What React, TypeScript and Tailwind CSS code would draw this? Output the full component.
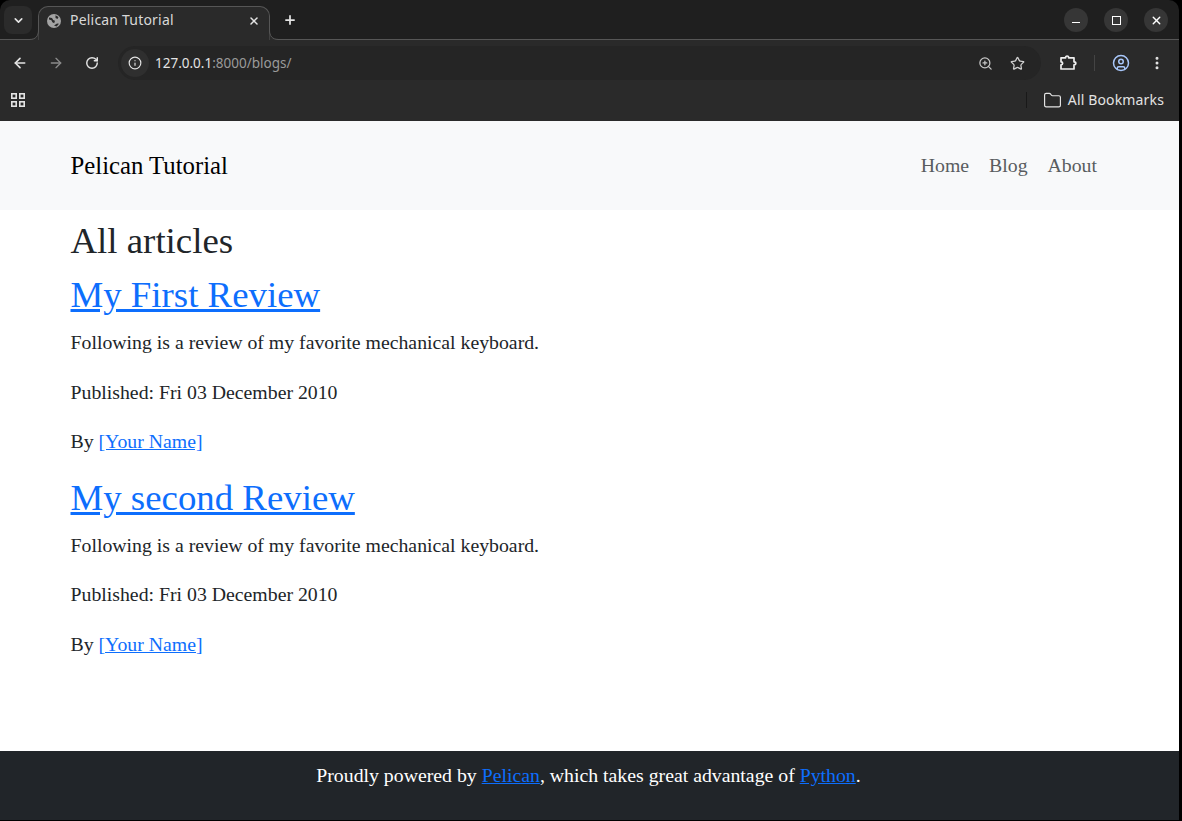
import { ArrowLeft, ArrowRight, ChevronDown, EllipsisVertical, Folder, Info, Plus, RotateCw, Star, UserCircle, X, ZoomIn } from "lucide-react"

function Article({ title }: { title: string }) {
    return (
        <article>
            <h2 className="text-[36.85px] leading-[44px] mb-[11px]">
                <a href="#" className="text-[#0d6efd] underline">{title}</a>
            </h2>
            <p className="mb-[19.8px]">Following is a review of my favorite mechanical keyboard.</p>
            <p className="mb-[19.8px]">Published: Fri 03 December 2010</p>
            <p className="mb-[18.8px]">By <a href="#" className="text-[#0d6efd] underline">[Your Name]</a></p>
        </article>
    )
}

function WindowButton({ children }: { children: React.ReactNode }) {
    return (
        <div className="w-6 h-6 rounded-full bg-[#363636] flex items-center justify-center text-white">
            {children}
        </div>
    )
}

function AppsIcon() {
    return (
        <svg width="16" height="16" viewBox="0 0 16 16" fill="none" stroke="#e3e3e3" strokeWidth="1.6" className="ml-[10px]">
            <rect x="1.8" y="1.8" width="4.4" height="4.4" />
            <rect x="9.8" y="1.8" width="4.4" height="4.4" />
            <rect x="1.8" y="9.8" width="4.4" height="4.4" />
            <rect x="9.8" y="9.8" width="4.4" height="4.4" />
        </svg>
    )
}

function ExtensionIcon() {
    return (
        <svg width="18" height="18" viewBox="0 0 18 18" fill="none" stroke="#f0f0f0" strokeWidth="1.7" strokeLinejoin="round" className="ml-[18px]">
            <path d="M2 3.8H6.6C6.6 1.4 9.6 1.4 9.6 3.8H15V7.8C17.4 7.8 17.4 10.8 15 10.8V15H2V10.8C4.2 10.8 4.2 7.8 2 7.8Z" />
        </svg>
    )
}

export default function App() {
    return (
        <div className="h-[821px] w-[1182px] overflow-hidden bg-black">
            <div className="h-[820px] w-[1179px] flex flex-col rounded-t-[10px] overflow-hidden font-['Liberation_Serif',serif]">
                {/* browser chrome */}
                <div className="h-[39px] shrink-0 flex items-end bg-[#1f1f1f] font-['Noto_Sans',sans-serif] text-[#e3e3e3]">
                    <div className="w-7 h-7 ml-1 mb-[5px] rounded-lg bg-[#2b2b2b] flex items-center justify-center">
                        <ChevronDown size={13} strokeWidth={3} />
                    </div>
                    <div className="relative z-10 -mb-px w-[232px] h-[34px] ml-[6px] pl-2 pr-[9px] pb-[6px] bg-[#2a2a2a] border border-b-0 border-[#565656] rounded-t-[10px] flex items-center text-[14px]">
                        <svg width="14" height="14" viewBox="0 0 14 14" className="shrink-0">
                            <circle cx="7" cy="7" r="7" fill="#a3a3a3" />
                            <path d="M2 3.5l3 .5 1.2 2 1.8.8-.8 2.4-1.8-1-1-2-2.4-.8zM8.5 1.2l3 1.8-1 2-2-1zM7 11.5l3-2 2 .3-2.4 2.6z" fill="#2a2a2a" />
                        </svg>
                        <span className="ml-[9px] mb-[2px] flex-1 text-[#d8d8d8] tracking-[0.2px]">Pelican Tutorial</span>
                        <X size={12} strokeWidth={3} />
                        <svg width="9" height="10" viewBox="0 0 9 10" className="absolute left-[-9px] bottom-0">
                            <path d="M0 8.5C5.5 8.5 8.5 6 8.5 0V10H0Z" fill="#2a2a2a" />
                            <path d="M0 9.5C5.5 9.5 8.5 6 8.5 0" fill="none" stroke="#565656" />
                        </svg>
                        <svg width="9" height="10" viewBox="0 0 9 10" className="absolute right-[-9px] bottom-0">
                            <path d="M9 8.5C3.5 8.5 .5 6 .5 0V10H9Z" fill="#2a2a2a" />
                            <path d="M9 9.5C3.5 9.5 .5 6 .5 0" fill="none" stroke="#565656" />
                        </svg>
                    </div>
                    <Plus size={14} strokeWidth={3} className="ml-[13px] mb-[12px]" />
                    <div className="ml-auto mr-[11px] mb-[7px] flex gap-4">
                        <WindowButton><div className="w-2 h-px bg-white mt-[5px]" /></WindowButton>
                        <WindowButton><div className="w-[9px] h-[9px] border-[1.5px] border-white" /></WindowButton>
                        <WindowButton><X size={13} strokeWidth={2.5} /></WindowButton>
                    </div>
                </div>
                <div className="h-[47px] shrink-0 flex items-center bg-[#2a2a2a] border-t border-[#565656] font-['Noto_Sans',sans-serif] text-[#e3e3e3]">
                    <ArrowLeft size={16} strokeWidth={2.5} className="ml-3" />
                    <ArrowRight size={16} strokeWidth={2} className="ml-5 text-[#8a8a8a]" />
                    <RotateCw size={14} strokeWidth={2.5} className="ml-[21px]" />
                    <div className="ml-[19px] h-[34px] w-[923px] rounded-full bg-[#252525] flex items-center">
                        <div className="w-7 h-7 ml-[3px] rounded-full bg-[#2f2f2f] flex items-center justify-center">
                            <Info size={14} strokeWidth={2} />
                        </div>
                        <span className="ml-[6px] text-[13.5px]">127.0.0.1<span className="text-[#9a9a9a]">:8000/blogs/</span></span>
                        <ZoomIn size={15} strokeWidth={2} className="ml-auto text-[#c8c8c8]" />
                        <Star size={15} strokeWidth={2} className="ml-[17px] mr-[16px] text-[#d0d0d0]" />
                    </div>
                    <ExtensionIcon />
                    <div className="ml-[17px] w-px h-4 bg-[#444]" />
                    <UserCircle size={18} strokeWidth={2} className="ml-[17px] text-[#a8c7fa]" />
                    <EllipsisVertical size={16} strokeWidth={2.5} className="ml-[19px]" />
                </div>
                <div className="h-[35px] shrink-0 pb-[7px] flex items-center bg-[#2a2a2a] font-['Noto_Sans',sans-serif] text-[#e3e3e3]">
                    <AppsIcon />
                    <div className="ml-auto w-px h-4 bg-[#191919]" />
                    <Folder size={19} strokeWidth={1.5} className="ml-[16px]" />
                    <span className="ml-[6px] mr-[15px] mb-[2px] text-[14px] tracking-[0.15px]">All Bookmarks</span>
                </div>

                {/* page */}
                <div className="flex-1 flex flex-col bg-white text-[19.8px] leading-[29.7px] text-[#212529]">
                    <nav className="h-[89px] shrink-0 bg-[#f8f9fa] px-[70.5px] flex items-center justify-between">
                        <a href="#" className="text-[24.75px] text-black">Pelican Tutorial</a>
                        <div className="flex gap-5 mr-[11.5px] text-[#595c5f]">
                            <a href="#">Home</a>
                            <a href="#">Blog</a>
                            <a href="#">About</a>
                        </div>
                    </nav>
                    <main className="flex-1 px-[70.5px]">
                        <h1 className="text-[36.85px] leading-[44px] mt-[8.5px] mb-[10.5px]">All articles</h1>
                        <Article title="My First Review" />
                        <Article title="My second Review" />
                    </main>
                    <footer className="h-[69px] shrink-0 bg-[#212529] text-white text-center pt-[10px] pr-[2px]">
                        Proudly powered by <a href="#" className="text-[#0d6efd] underline">Pelican</a>, which takes great advantage of <a href="#" className="text-[#0d6efd] underline">Python</a>.
                    </footer>
                </div>
            </div>
        </div>
    )
}
